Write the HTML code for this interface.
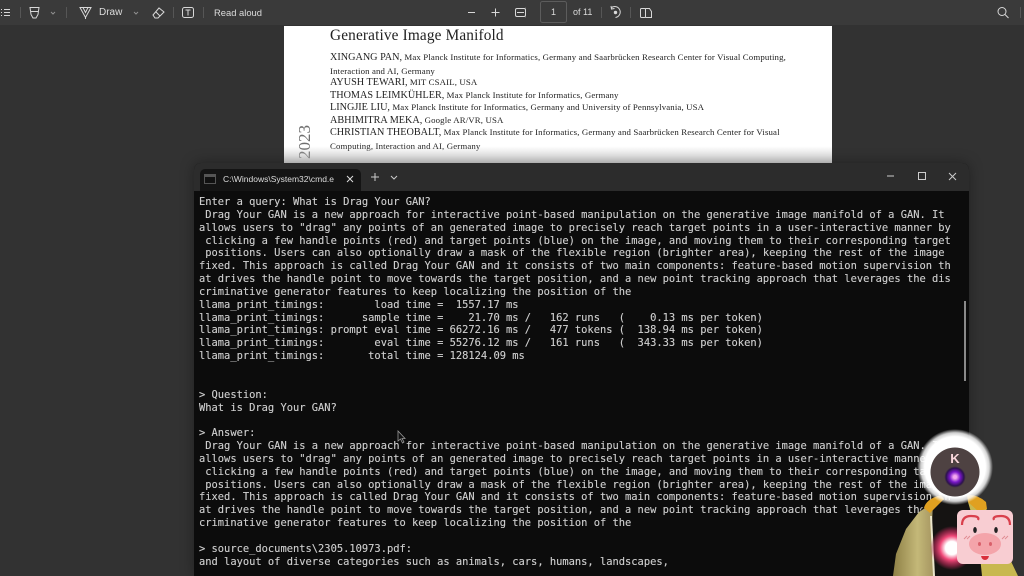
<!DOCTYPE html>
<html><head><meta charset="utf-8">
<style>
*{margin:0;padding:0;box-sizing:border-box}
html,body{width:1024px;height:576px;overflow:hidden;background:#323232}
body{position:relative;font-family:"Liberation Sans",sans-serif}
.a{position:absolute;white-space:pre}
#bar{position:absolute;left:0;top:0;width:1024px;height:25px;background:#3a3a3a;color:#dcdcdc;font-size:10px;filter:blur(.35px)}
#pdf{position:absolute;left:284px;top:26px;width:548px;height:140px;background:#fff;color:#222;font-family:"Liberation Serif",serif;filter:blur(.3px)}
#pdf .a{font-size:8.8px;letter-spacing:.14px}
#pdf b{font-weight:normal;font-size:10.2px;letter-spacing:0}
#term{position:absolute;left:194px;top:163px;width:775px;height:413px;background:#0c0c0c;border-radius:7px 7px 0 0;box-shadow:0 0 14px rgba(0,0,0,.35)}
#tt{position:absolute;left:0;top:0;width:775px;height:28px;background:#2c2c2c;border-radius:7px 7px 0 0}
#tab{position:absolute;left:6px;top:6px;width:161px;height:22px;background:#141414;border-radius:5px 5px 0 0;color:#ddd;font-size:8.5px;filter:blur(.2px)}
#txt{position:absolute;left:5px;top:33px;font:10.42px/12.85px "DejaVu Sans Mono","Liberation Mono",monospace;color:#cfcfcf;white-space:pre;filter:blur(.3px);-webkit-text-stroke:.12px #cfcfcf}
</style></head><body>
<div id="bar">
<svg class="a" style="left:0;top:0" width="1024" height="25" fill="none" stroke="#d8d8d8" stroke-width="1">
<path d="M1 9.500h1M1 12.500h1M1 15.500h1M4 9.500h6M4 12.500h6M4 15.500h6"/>
<path d="M30 7.500h9l-1 7-2 3.500h-3l-2-3.500zM30.500 11.500h8"/>
<path d="M51 12l2 2 2-2M134 12l2 2 2-2" stroke="#8f8f8f"/>
<path d="M80 7.500h11l-5.500 10zM85.500 17.500v1.500M83 7.500l2.500 5 2.500-5"/>
<path d="M153 15l6-7 5 4-6 6h-3zM156 12l4 4"/>
<rect x="182.500" y="7.500" width="11" height="10" rx="2"/><path d="M185.500 10h5M188 10v5.500"/>
<path d="M20.500 7v11M66.500 7v11M173.500 7v11M203.500 7v11M525.500 7v11M601.500 7v11M630.500 7v11M1020.500 7v11" stroke="#565656"/>
<path d="M468 12.500h7M491.500 12.500h8M495.500 8.500v8"/>
<rect x="515.500" y="8.500" width="10" height="8" rx="1.500"/><path d="M517 12.500h7"/>
<rect x="540.500" y="1.500" width="26" height="21" rx="2" stroke="#5c5c5c"/>
<path d="M611 8a5.500 5.500 0 1 1 4.500 9.500M611 6l.5 3 3-.5"/><circle cx="615.500" cy="12.500" r="1.200" fill="#ddd"/>
<rect x="640.500" y="8.500" width="5" height="9" rx="1"/><path d="M645.500 8.500h4l2 3v6h-6"/>
<circle cx="1002" cy="11.500" r="4"/><path d="M1005 14.500l3.500 3.500"/>
</svg>
<span class="a" style="left:99px;top:7px">Draw</span>
<span class="a" style="left:214px;top:7px;font-size:9.4px">Read aloud</span>
<span class="a" style="left:551px;top:7px;font-size:9px">1</span>
<span class="a" style="left:573px;top:7px;font-size:9px">of 11</span>
</div>

<div id="pdf">
<span class="a" style="left:46px;top:0;font-size:15.3px;letter-spacing:.01em;line-height:19px">Generative Image Manifold</span>
<span class="a" style="left:46px;top:26px"><b>XINGANG PAN,</b> Max Planck Institute for Informatics, Germany and Saarbrücken Research Center for Visual Computing,</span>
<span class="a" style="left:46px;top:40px">Interaction and AI, Germany</span>
<span class="a" style="left:46px;top:51px"><b>AYUSH TEWARI,</b> MIT CSAIL, USA</span>
<span class="a" style="left:46px;top:64px"><b>THOMAS LEIMKÜHLER,</b> Max Planck Institute for Informatics, Germany</span>
<span class="a" style="left:46px;top:76px"><b>LINGJIE LIU,</b> Max Planck Institute for Informatics, Germany and University of Pennsylvania, USA</span>
<span class="a" style="left:46px;top:89px"><b>ABHIMITRA MEKA,</b> Google AR/VR, USA</span>
<span class="a" style="left:46px;top:101px"><b>CHRISTIAN THEOBALT,</b> Max Planck Institute for Informatics, Germany and Saarbrücken Research Center for Visual</span>
<span class="a" style="left:46px;top:115px">Computing, Interaction and AI, Germany</span>
<span class="a" style="left:13px;top:111px;font-size:17px;color:#6e6e6e;letter-spacing:0;transform:rotate(-90deg);transform-origin:10px 12px;line-height:20px">2023</span>
<div class="a" style="left:0;top:120px;width:548px;height:20px;background:linear-gradient(rgba(200,200,200,0),rgba(190,190,190,.8))"></div>
</div>

<div id="term">
<div id="tt">
<div id="tab">
<svg class="a" style="left:4px;top:5px" width="12" height="10"><rect width="12" height="10" fill="#555"/><rect x="1" y="3" width="10" height="6" fill="#111"/></svg>
<span class="a" style="left:23px;top:5px">C:\Windows\System32\cmd.e</span>
<svg class="a" style="left:145px;top:5px" width="10" height="10" stroke="#ddd" fill="none"><path d="M2 2l6 6M8 2l-6 6"/></svg>
</div>
<svg class="a" style="left:170px;top:6px" width="605" height="18" stroke="#ccc" fill="none">
<path d="M7 8h8M11 4v8M27 7l3 3 3-3"/>
<path d="M523 7h7"/>
<rect x="554.500" y="3.500" width="7" height="7"/>
<path d="M585 4l7 7M592 4l-7 7"/>
</svg>
</div>
<div id="txt">Enter a query: What is Drag Your GAN?
 Drag Your GAN is a new approach for interactive point-based manipulation on the generative image manifold of a GAN. It
allows users to "drag" any points of an generated image to precisely reach target points in a user-interactive manner by
 clicking a few handle points (red) and target points (blue) on the image, and moving them to their corresponding target
 positions. Users can also optionally draw a mask of the flexible region (brighter area), keeping the rest of the image
fixed. This approach is called Drag Your GAN and it consists of two main components: feature-based motion supervision th
at drives the handle point to move towards the target position, and a new point tracking approach that leverages the dis
criminative generator features to keep localizing the position of the
llama_print_timings:        load time =  1557.17 ms
llama_print_timings:      sample time =    21.70 ms /   162 runs   (    0.13 ms per token)
llama_print_timings: prompt eval time = 66272.16 ms /   477 tokens (  138.94 ms per token)
llama_print_timings:        eval time = 55276.12 ms /   161 runs   (  343.33 ms per token)
llama_print_timings:       total time = 128124.09 ms


&gt; Question:
What is Drag Your GAN?

&gt; Answer:
 Drag Your GAN is a new approach for interactive point-based manipulation on the generative image manifold of a GAN. It
allows users to "drag" any points of an generated image to precisely reach target points in a user-interactive manner by
 clicking a few handle points (red) and target points (blue) on the image, and moving them to their corresponding target
 positions. Users can also optionally draw a mask of the flexible region (brighter area), keeping the rest of the image
fixed. This approach is called Drag Your GAN and it consists of two main components: feature-based motion supervision th
at drives the handle point to move towards the target position, and a new point tracking approach that leverages the dis
criminative generator features to keep localizing the position of the

&gt; source_documents\2305.10973.pdf:
and layout of diverse categories such as animals, cars, humans, landscapes,</div>
<div class="a" style="left:770px;top:138px;width:2px;height:80px;background:#8a8a8a"></div>
</div>

<svg class="a" style="left:397px;top:430px" width="10" height="14" fill="#111" stroke="#999" stroke-width=".8"><path d="M1 1v10l2.500-2 2 4 1.500-1-2-3.500h3z"/></svg>

<svg class="a" style="left:860px;top:420px" width="164" height="156">
<defs>
<radialGradient id="halo"><stop offset=".8" stop-color="#fff"/><stop offset=".9" stop-color="#fff" stop-opacity=".8"/><stop offset="1" stop-color="#fff" stop-opacity="0"/></radialGradient>
<radialGradient id="eye"><stop offset=".15" stop-color="#f4a8f0"/><stop offset=".5" stop-color="#7a18c8"/><stop offset=".85" stop-color="#2c1050"/><stop offset="1" stop-color="#3c2c3c" stop-opacity=".4"/></radialGradient>
<radialGradient id="chest"><stop offset=".3" stop-color="#fff"/><stop offset=".55" stop-color="#f04878"/><stop offset=".8" stop-color="#a82850" stop-opacity=".7"/><stop offset="1" stop-color="#a82850" stop-opacity="0"/></radialGradient>
<linearGradient id="hood" x1="0" y1="0" x2="1" y2="0"><stop offset="0" stop-color="#8e8046"/><stop offset=".6" stop-color="#c4b878"/><stop offset="1" stop-color="#a49460"/></linearGradient>
</defs>
<path d="M33 156l4-25 10-22 16-22 12-7 32 0 18 6 16 30 16 40z" fill="#151312"/>
<path d="M33 156l3-22 10-25 13-17 14-9-1 20 2 53z" fill="url(#hood)"/>
<path d="M72 96l3 60h-2l-3-60z" fill="#ece6cc"/>
<path d="M108 82l16 2 14 30 20 42h-36l-4-40z" fill="#c8b850"/>
<path d="M64 88q2-9 17-13l3 4-10 10-4 4zM107 75q10-1 19 7l1 7-9 2-10-9z" fill="#e0a020"/>
<circle cx="95" cy="47" r="38" fill="url(#halo)"/>
<circle cx="95" cy="52" r="24.500" fill="#4e4242"/>
<text x="95" y="43" font-family="Liberation Sans,sans-serif" font-size="13" font-weight="bold" fill="#fbd8dc" text-anchor="middle">K</text>
<circle cx="95" cy="57" r="10.500" fill="url(#eye)"/>
<circle cx="92" cy="128" r="22" fill="url(#chest)"/>
<rect x="97" y="90" width="56" height="54" rx="6" fill="#f8cdd2"/>
<path d="M102 105q0-9 9-9t7 4M150 105q0-9-9-9t-7 4" fill="none" stroke="#d9404c" stroke-width="2.200"/>
<ellipse cx="115" cy="110" rx="1.800" ry="3" fill="#222"/><ellipse cx="136" cy="110" rx="1.800" ry="3" fill="#222"/>
<path d="M104 119l3-3M107 119l3-3M142 119l3-3M145 119l3-3" stroke="#e08a90" stroke-width=".9"/>
<ellipse cx="125" cy="124" rx="16" ry="11" fill="#f4a4aa"/>
<ellipse cx="119.500" cy="124" rx="1.500" ry="2" fill="#d9606a"/><ellipse cx="130.500" cy="124" rx="1.500" ry="2" fill="#d9606a"/>
<path d="M121 136h8q-1 4-4 4t-4-4z" fill="#d9303c"/>
</svg>
</body></html>
